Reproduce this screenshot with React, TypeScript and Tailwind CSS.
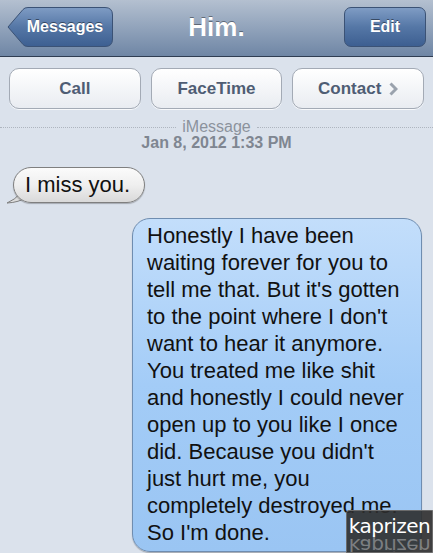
import React from 'react'

const font = { fontFamily: '"Liberation Sans", Arial, Helvetica, sans-serif' }

// Back button drawn as an arrow-shaped pill
function BackButton() {
  return (
    <div className="relative h-[40px] w-[106px]">
      <svg className="absolute inset-0" width="106" height="40" viewBox="0 0 106 40">
        <defs>
          <linearGradient id="navbtn" x1="0" y1="0" x2="0" y2="1">
            <stop offset="0" stopColor="#7f9cc4" />
            <stop offset="0.5" stopColor="#5577a6" />
            <stop offset="1" stopColor="#3d5f91" />
          </linearGradient>
        </defs>
        <path
          d="M1 20 L16 2.5 Q17.5 0.5 21 0.5 L98 0.5 Q105.5 0.5 105.5 8 L105.5 32 Q105.5 39.5 98 39.5 L21 39.5 Q17.5 39.5 16 37.5 Z"
          fill="url(#navbtn)"
          stroke="#3b5275"
          strokeWidth="1"
        />
      </svg>
      <span className="relative flex h-full items-center justify-center pl-[10px] text-[16px] font-bold text-white [text-shadow:0_-1px_0_rgba(0,0,0,0.45)]">
        Messages
      </span>
    </div>
  )
}

function ActionButton({ label, chevron = false }: { label: string; chevron?: boolean }) {
  return (
    <div className="flex h-[41px] items-center justify-center gap-[8px] rounded-[10px] border border-[#a3aab5] bg-gradient-to-b from-[#ffffff] to-[#e9ecf1] text-[17px] font-bold text-[#4f5d74] shadow-[0_1px_0_rgba(255,255,255,0.8)]">
      <span>{label}</span>
      {chevron && (
        <svg width="9" height="14" viewBox="0 0 9 14">
          <path d="M1.5 1.5 L7 7 L1.5 12.5" fill="none" stroke="#9aa2ad" strokeWidth="3" />
        </svg>
      )}
    </div>
  )
}

export default function App() {
  return (
    <div className="relative h-[553px] w-[433px] overflow-hidden bg-[#dbe2ec]" style={font}>
      {/* Navigation bar */}
      <div className="grid h-[57px] grid-cols-[1fr_auto_1fr] items-start border-b border-[#2f3d52] bg-gradient-to-b from-[#b4c0d0] via-[#91a3bb] to-[#6f86a5] px-[7px] pt-[7px]">
        <div className="flex">
          <BackButton />
        </div>
        <div className="flex h-[40px] items-center text-[26px] font-bold text-white [text-shadow:0_-1px_0_rgba(0,0,0,0.4)]">
          Him.
        </div>
        <div className="flex justify-end">
          <div className="flex h-[40px] w-[82px] items-center justify-center rounded-[7px] border border-[#3b5275] bg-gradient-to-b from-[#7f9cc4] via-[#5577a6] to-[#3d5f91] text-[16px] font-bold text-white [text-shadow:0_-1px_0_rgba(0,0,0,0.45)]">
            Edit
          </div>
        </div>
      </div>

      {/* Call / FaceTime / Contact */}
      <div className="grid grid-cols-3 gap-[10px] px-[9px] pt-[11px]">
        <ActionButton label="Call" />
        <ActionButton label="FaceTime" />
        <ActionButton label="Contact" chevron />
      </div>

      {/* Service + timestamp */}
      <div className="mt-[10px] flex items-center gap-[6px]">
        <div className="flex-1 border-t border-dotted border-[#aeb5bf]" />
        <span className="text-[16px] leading-[16px] text-[#8b929c]">iMessage</span>
        <div className="flex-1 border-t border-dotted border-[#aeb5bf]" />
      </div>
      <div className="text-center text-[16px] font-bold leading-[16px] text-[#7f8691]">
        Jan 8, 2012 1:33 PM
      </div>

      {/* Received bubble */}
      <div className="mt-[16px] flex pl-[13px]">
        <div className="relative">
          <svg className="absolute bottom-[-1px] left-[-7px]" width="22" height="24" viewBox="0 0 22 24">
            <path d="M20 1 Q17 16 1 23 Q13 22.5 21 17 Z" fill="#dcdcdc" stroke="#7f7f7f" strokeWidth="1" />
          </svg>
          <div className="relative rounded-[18px] border border-[#7f7f7f] bg-gradient-to-b from-[#fbfbfb] via-[#efefef] to-[#d9d9d9] py-[4px] pl-[11px] pr-[14px] text-[22px] leading-[26px] text-[#111] shadow-[0_1px_1px_rgba(0,0,0,0.25)]">
            I miss you.
          </div>
        </div>
      </div>

      {/* Sent bubble */}
      <div className="mt-[15px] flex justify-end pr-[11px]">
        <div className="w-[290px] rounded-[18px] border border-[#6f8db0] bg-gradient-to-b from-[#c3defb] via-[#a3ccf7] to-[#9ac5f3] pb-[5px] pl-[14px] pr-[10px] pt-[3px] text-[22px] leading-[27px] text-[#111] shadow-[0_1px_1px_rgba(0,0,0,0.25)]">
          Honestly I have been waiting forever for you to tell me that. But it's gotten to the point where I don't want to hear it anymore. You treated me like shit and honestly I could never open up to you like I once did. Because you didn't just hurt me, you completely destroyed me. So I'm done.
        </div>
      </div>

      {/* Watermark */}
      <div className="absolute bottom-0 right-0 flex h-[43px] w-[87px] flex-col items-center overflow-hidden rounded-tl-[3px] border border-[#6b6b6b] bg-[#2e2e2e]/90 pt-[5px]">
        <span className="text-[20px] leading-[20px] tracking-[-0.5px] text-white" style={{ fontFamily: '"DejaVu Sans", sans-serif' }}>
          kaprizen
        </span>
        <span
          aria-hidden="true"
          className="scale-y-[-1] text-[20px] leading-[20px] tracking-[-0.5px] text-white/35"
          style={{ fontFamily: '"DejaVu Sans", sans-serif' }}
        >
          kaprizen
        </span>
      </div>
    </div>
  )
}
